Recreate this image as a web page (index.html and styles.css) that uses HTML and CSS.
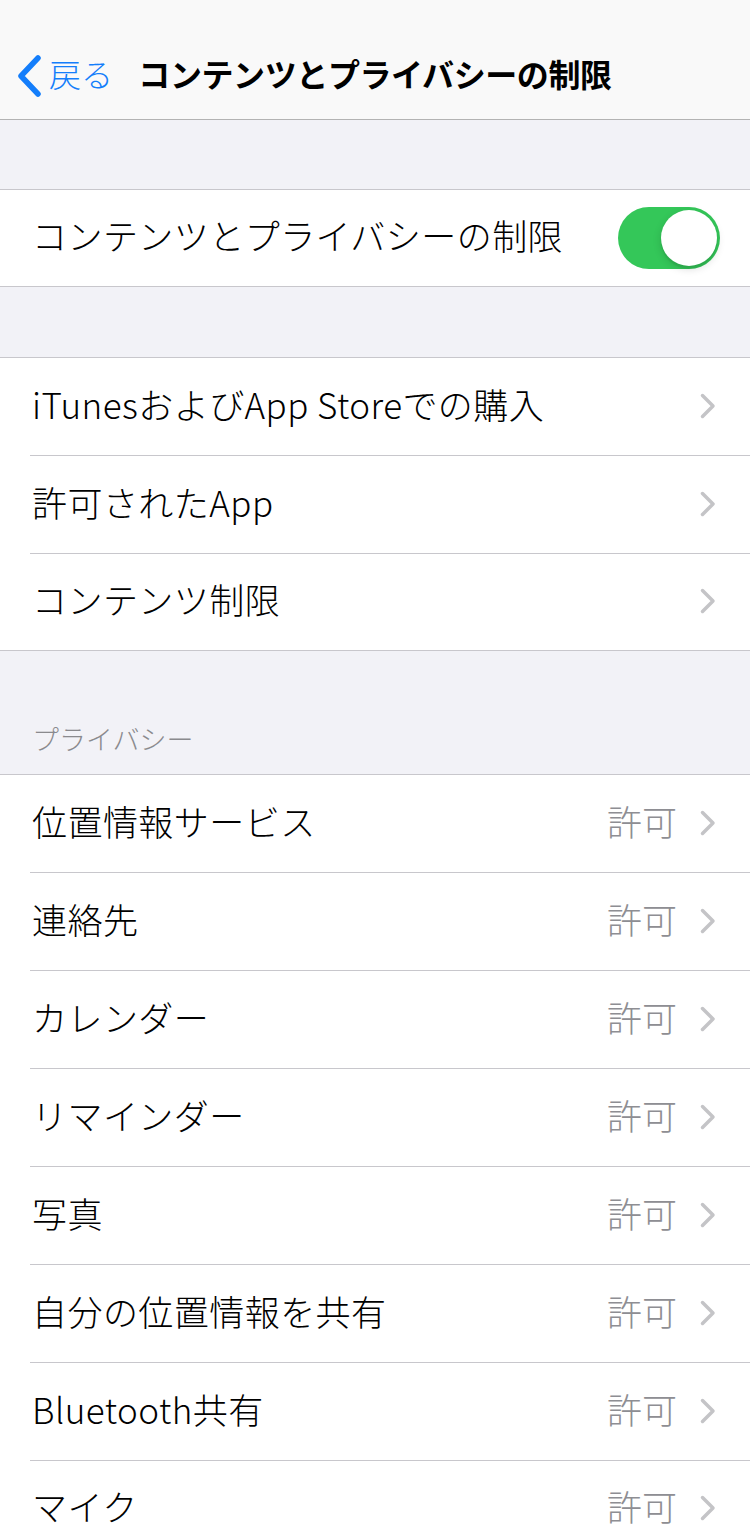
FILE: index.html
```html
<!DOCTYPE html>
<html lang="ja">
<head>
    <meta charset="UTF-8">
    <meta name="viewport" content="width=device-width, initial-scale=1.0">
    <title>コンテンツとプライバシーの制限</title>
    <link rel="stylesheet" href="styles.css">
</head>
<body>

    <div class="navbar">
        <div class="nav-back">
            <svg class="back-icon" width="26" height="42" viewBox="0 0 26 42">
                <polyline points="22,3 5,21 22,39" fill="none" stroke="#147efb" stroke-width="5.5" stroke-linecap="round" stroke-linejoin="round"/>
            </svg>
            <span>戻る</span>
        </div>
        <div class="nav-title">コンテンツとプライバシーの制限</div>
        <div></div>
    </div>

    <div class="gap gap-top"></div>

    <!-- master switch -->
    <div class="group">
        <div class="row">
            <div class="row-inner">
                <span class="label">コンテンツとプライバシーの制限</span>
                <div class="toggle on"><div class="knob"></div></div>
            </div>
        </div>
    </div>

    <div class="gap"></div>

    <div class="group">
        <div class="row">
            <div class="row-inner">
                <span class="label">iTunesおよびApp Storeでの購入</span>
                <svg class="chevron" width="16" height="26" viewBox="0 0 16 26"><polyline points="2.5,2.5 13,13 2.5,23.5" fill="none" stroke="#c4c4c7" stroke-width="3.5" stroke-linecap="round" stroke-linejoin="round"/></svg>
            </div>
        </div>
        <div class="row">
            <div class="row-inner">
                <span class="label">許可されたApp</span>
                <svg class="chevron" width="16" height="26" viewBox="0 0 16 26"><polyline points="2.5,2.5 13,13 2.5,23.5" fill="none" stroke="#c4c4c7" stroke-width="3.5" stroke-linecap="round" stroke-linejoin="round"/></svg>
            </div>
        </div>
        <div class="row">
            <div class="row-inner">
                <span class="label">コンテンツ制限</span>
                <svg class="chevron" width="16" height="26" viewBox="0 0 16 26"><polyline points="2.5,2.5 13,13 2.5,23.5" fill="none" stroke="#c4c4c7" stroke-width="3.5" stroke-linecap="round" stroke-linejoin="round"/></svg>
            </div>
        </div>
    </div>

    <div class="section-header">プライバシー</div>

    <div class="group" id="privacy-list"></div>

    <script>
        const privacyItems = [
            "位置情報サービス",
            "連絡先",
            "カレンダー",
            "リマインダー",
            "写真",
            "自分の位置情報を共有",
            "Bluetooth共有",
            "マイク"
        ];

        const list = document.getElementById("privacy-list");
        privacyItems.forEach(item => {
            const row = document.createElement("div");
            row.className = "row";
            row.innerHTML =
                '<div class="row-inner">' +
                    '<span class="label">' + item + '</span>' +
                    '<span class="value">許可</span>' +
                    '<svg class="chevron" width="16" height="26" viewBox="0 0 16 26"><polyline points="2.5,2.5 13,13 2.5,23.5" fill="none" stroke="#c4c4c7" stroke-width="3.5" stroke-linecap="round" stroke-linejoin="round"/></svg>' +
                '</div>';
            list.appendChild(row);
        });
    </script>

</body>
</html>
```

FILE: styles.css
```css
body {
    margin: 0;
    padding: 0;
    background-color: #f2f2f7;
    font-family: "Noto Sans CJK JP", "Noto Sans", sans-serif;
    color: #000;
    overflow: hidden;
}

.navbar {
    display: grid;
    grid-template-columns: 1fr auto 1fr;
    align-items: center;
    height: 78px;
    padding-top: 34px;
    padding-bottom: 7px;
    background-color: #f9f9f9;
    border-bottom: 1px solid #b3b3b3;
}

.nav-back {
    display: flex;
    align-items: center;
    padding-left: 16px;
    color: #147efb;
    font-size: 32px;
    font-weight: 300;
    line-height: 40px;
}

.back-icon {
    margin-right: 7px;
    margin-top: 5px;
}

.nav-title {
    font-size: 32px;
    font-weight: bold;
    line-height: 40px;
    letter-spacing: -0.4px;
}

.gap {
    height: 70px;
}

.gap-top {
    height: 69px;
}

.group {
    background-color: #fff;
    border-top: 1px solid #c8c7cc;
    border-bottom: 1px solid #c8c7cc;
}

.row {
    padding-left: 30px;
}

.row-inner {
    display: flex;
    align-items: center;
    height: 97px;
    padding-right: 34px;
    border-bottom: 1px solid #c8c7cc;
}

.row:last-child .row-inner {
    border-bottom: none;
    height: 96px;
}

.label {
    flex: 1;
    padding-left: 2px;
    padding-bottom: 6px;
    font-size: 35px;
    font-weight: 300;
    line-height: 44px;
    letter-spacing: 0.45px;
}

.value {
    margin-right: 23px;
    padding-bottom: 6px;
    font-size: 35px;
    font-weight: 300;
    line-height: 44px;
    color: #8e8e93;
}

.chevron {
    display: block;
    margin-bottom: 2px;
}

.toggle {
    width: 102px;
    height: 62px;
    border-radius: 31px;
    background-color: #e9e9eb;
    margin-right: -4px;
    position: relative;
}

.toggle.on {
    background-color: #34c759;
}

.toggle .knob {
    position: absolute;
    top: 3px;
    right: 3px;
    width: 56px;
    height: 56px;
    border-radius: 50%;
    background-color: #fff;
    box-shadow: 0 3px 8px rgba(0, 0, 0, 0.15), 0 3px 1px rgba(0, 0, 0, 0.06);
}

.section-header {
    height: 72px;
    padding: 33px 0 18px 32px;
    font-size: 27px;
    font-weight: 300;
    line-height: 34px;
    color: #8a8a8e;
    display: flex;
    align-items: flex-end;
}
```
